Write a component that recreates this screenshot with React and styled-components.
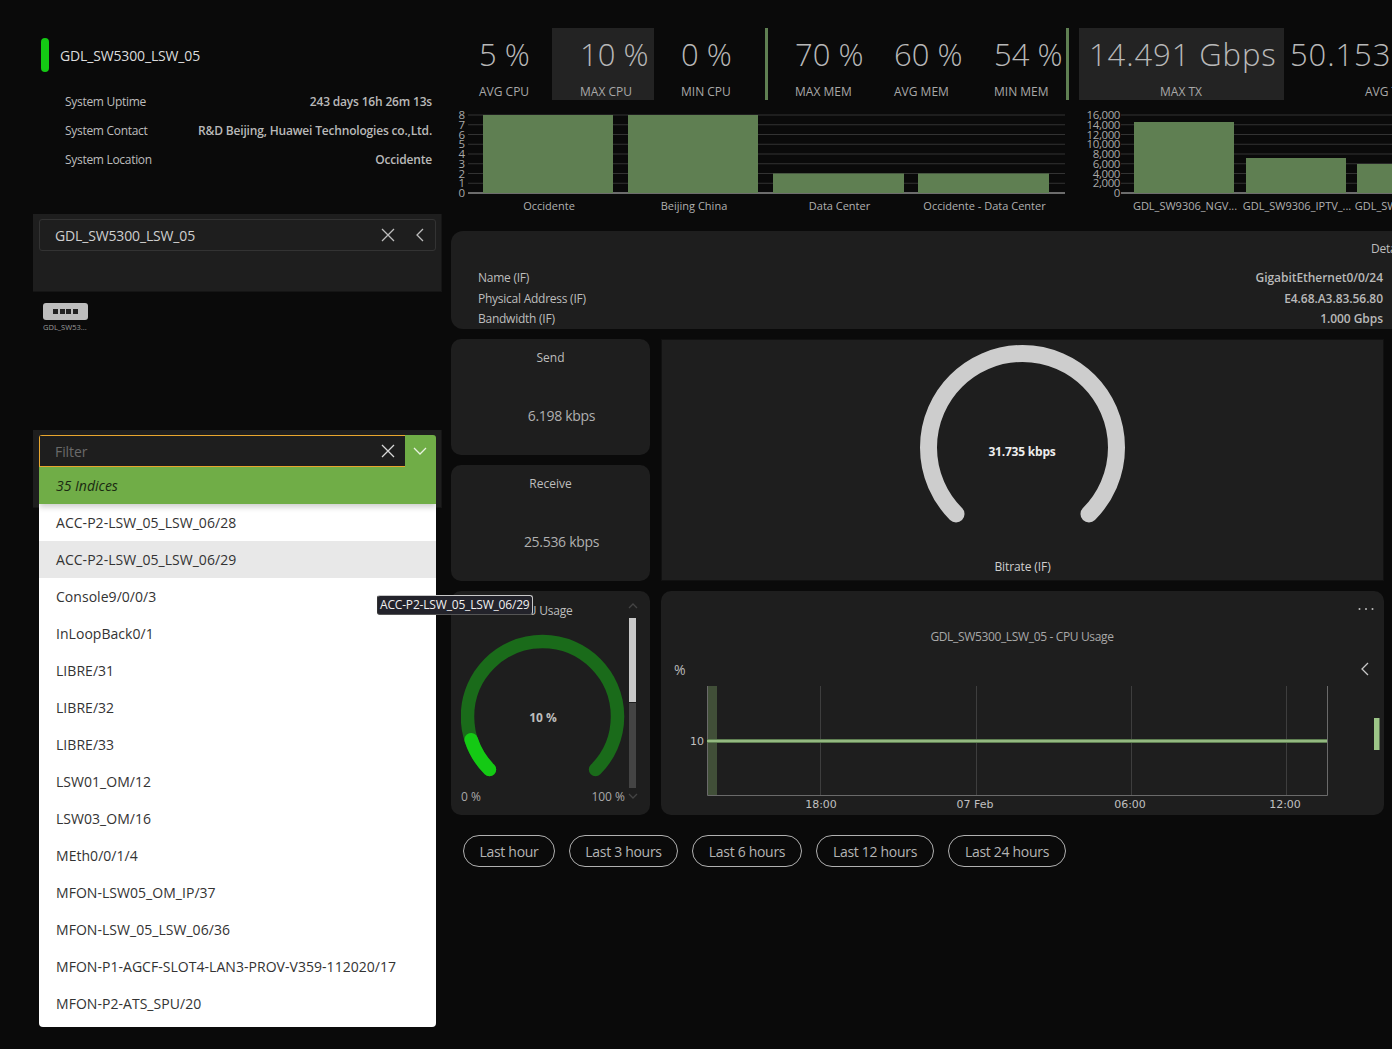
import React from 'react';
import styled, { createGlobalStyle } from 'styled-components';

const Global = createGlobalStyle`
  html, body { margin: 0; padding: 0; background: #0a0a0a; }
  body { font-family: "Open Sans", "Noto Sans", "Liberation Sans", sans-serif; color: #bdbdbd; }
  * { box-sizing: border-box; }
`;

const Page = styled.div`
  position: relative;
  display: flex;
  align-items: flex-start;
  gap: 9px;
  width: 1392px;
  height: 1049px;
  padding-left: 33px;
  overflow: hidden;
  background: #0a0a0a;
`;

const LeftColumn = styled.aside`
  flex: 0 0 409px;
  position: relative;
  padding-top: 38px;
`;

const DeviceHeader = styled.header`
  display: flex;
  align-items: center;
  gap: 11px;
  height: 34px;
  padding-left: 8px;
  color: #dcdcdc;
  font-size: 14px;
  letter-spacing: -0.15px;
`;

const StatusBar = styled.span`
  width: 8px;
  height: 34px;
  border-radius: 4px;
  background: #14c914;
`;

const InfoList = styled.div`
  margin-top: 15px;
  padding: 0 10px 0 32px;
`;

const InfoRow = styled.div`
  display: flex;
  justify-content: space-between;
  align-items: center;
  height: 29px;
  font-size: 12px;
  letter-spacing: -0.3px;
`;

const InfoValue = styled.b`
  font-weight: 600;
  color: #b9b9b9;
  letter-spacing: -0.18px;
`;

const SelectPanel = styled.section`
  height: 78px;
  margin-top: ${p => p.$top}px;
  padding: 5px 5px 5px 6px;
  background: #1e1e1e;
  border-right: 1px solid #151515;
  border-bottom: 1px solid #151515;
`;

const SelectBox = styled.div`
  display: flex;
  align-items: center;
  gap: 21px;
  height: 32px;
  padding: 0 11px 0 15px;
  border: 1px solid #333;
  border-radius: 3px;
  color: #cfcfcf;
  font-size: 14px;
  letter-spacing: -0.15px;
`;

const SelectText = styled.span`
  flex: 1;
`;

const IconSvg = styled.svg`
  display: block;
  flex: none;
  fill: none;
  stroke: ${p => p.$color || '#bdbdbd'};
  stroke-width: 1.3;
`;

const DeviceNode = styled.div`
  display: flex;
  flex-direction: column;
  width: 46px;
  margin: 11px 0 0 10px;
`;

const DeviceBody = styled.div`
  display: flex;
  align-items: center;
  justify-content: center;
  gap: 1.5px;
  width: 45px;
  height: 17px;
  border-radius: 3px;
  background: #bdbdbd;
`;

const Port = styled.i`
  width: 5px;
  height: 5px;
  background: #222;
`;

const DeviceLabel = styled.span`
  margin-top: 2px;
  font-size: 7.5px;
  line-height: 11px;
  color: #9a9a9a;
  white-space: nowrap;
`;

const FilterBar = styled.div`
  display: flex;
  height: 32px;
  border-radius: 3px 3px 0 0;
  overflow: hidden;
`;

const FilterInput = styled.div`
  flex: 1;
  display: flex;
  align-items: center;
  justify-content: space-between;
  padding: 0 10px 0 15px;
  background: #1e1e1e;
  border: 1px solid #e8a62e;
  border-right: 0;
  color: #6a6a6a;
  font-size: 14px;
  letter-spacing: -0.1px;
`;

const FilterToggle = styled.div`
  flex: 0 0 31px;
  display: flex;
  align-items: center;
  justify-content: center;
  padding-right: 2px;
  background: #70ad47;
`;

const Dropdown = styled.div`
  position: absolute;
  left: 6px;
  top: 467px;
  width: 397px;
  border-radius: 0 0 4px 4px;
  overflow: hidden;
  background: #fff;
  padding-bottom: 5px;
`;

const DropdownHead = styled.div`
  position: relative;
  display: flex;
  align-items: center;
  height: 37px;
  padding-left: 17px;
  background: #70ad47;
  box-shadow: 0 3px 6px rgba(0, 0, 0, 0.2);
  color: #1a2a12;
  font-size: 14px;
  font-style: italic;
`;

const DropdownRow = styled.div`
  display: flex;
  align-items: center;
  height: 37px;
  padding-left: 17px;
  background: ${p => (p.$active ? '#e8e8e8' : '#fff')};
  color: #333;
  font-size: 14px;
  letter-spacing: 0.04px;
  white-space: nowrap;
`;

const Tooltip = styled.div`
  position: absolute;
  left: 344px;
  top: 595px;
  z-index: 5;
  width: 156px;
  height: 20px;
  padding-left: 2px;
  border: 1px solid #c8c8c8;
  border-left-color: #333;
  border-bottom-color: #555;
  border-radius: 3px;
  background: #23232b;
  color: #f0f0f0;
  font-size: 12px;
  line-height: 18px;
  letter-spacing: -0.18px;
  white-space: nowrap;
`;

const RightColumn = styled.main`
  flex: 0 0 auto;
  width: 933px;
  padding-top: 28px;
`;

const StatsRow = styled.div`
  display: flex;
  width: 1100px;
  height: 72px;
`;

const StatCell = styled.div`
  flex: 0 0 ${p => p.$w}px;
  padding-left: ${p => p.$pad}px;
  background: ${p => (p.$hl ? '#232323' : 'transparent')};
  margin-left: ${p => p.$ml || 0}px;
  white-space: nowrap;
`;

const StatValue = styled.div`
  height: 50px;
  font-size: 31px;
  line-height: 53px;
  font-weight: 300;
  color: #b8b8b8;
  letter-spacing: ${p => p.$track || 0}px;
`;

const StatLabel = styled.div`
  font-size: 12px;
  line-height: 28px;
  color: #a8a8a8;
  padding-left: ${p => p.$shift || 0}px;
`;

const StatDivider = styled.span`
  flex: 0 0 3px;
  background: #5f7f52;
`;

const ChartsRow = styled.div`
  display: flex;
  gap: 20px;
  width: 1100px;
  height: 105px;
  margin-top: 10px;
`;

const PlotSvg = styled.svg`
  display: block;
  flex: none;
  font-family: "Open Sans", "Noto Sans", sans-serif;
`;

const DetailsPanel = styled.section`
  width: 1000px;
  height: 98px;
  margin-top: 16px;
  padding: 0 0 0 27px;
  background: #1e1e1e;
  border-radius: 12px;
  overflow: hidden;
  font-size: 12px;
  letter-spacing: -0.25px;
`;

const DetailsTitle = styled.div`
  height: 36px;
  padding: 9px 0 0 893px;
  white-space: nowrap;
`;

const DetailRows = styled.div`
  width: 905px;
`;

const DetailRow = styled.div`
  display: flex;
  justify-content: space-between;
  align-items: center;
  height: 20.7px;
`;

const DetailValue = styled.b`
  font-weight: 600;
  color: #b9b9b9;
  letter-spacing: -0.05px;
`;

const DashGrid = styled.div`
  display: grid;
  grid-template-columns: 199px 723px;
  grid-template-rows: 116px 116px 224px;
  column-gap: 11px;
  row-gap: 10px;
  margin-top: 10px;
`;

const Card = styled.section`
  background: #1e1e1e;
  border-radius: 10px;
`;

const KpiCard = styled(Card)`
  display: flex;
  flex-direction: column;
  align-items: center;
  padding-top: 10px;
  font-size: 12px;
`;

const KpiValue = styled.div`
  margin-top: 40px;
  padding-left: 22px;
  font-size: 14px;
  letter-spacing: -0.3px;
  color: #b0b0b0;
`;

const BitrateCard = styled.section`
  grid-column: 2;
  grid-row: 1 / span 2;
  display: flex;
  flex-direction: column;
  align-items: center;
  background: #1e1e1e;
  border: 1px solid #111;
`;

const GaugeTitle = styled.div`
  margin-top: 4px;
  font-size: 12px;
  letter-spacing: -0.1px;
  color: #cfcfcf;
`;

const CpuCard = styled(Card)`
  display: flex;
  padding: 12px 12px 12px 10px;
`;

const CpuMain = styled.div`
  flex: 0 0 164px;
  font-size: 12px;
`;

const CpuTitle = styled.div`
  text-align: center;
  line-height: 16px;
  letter-spacing: -0.2px;
`;

const CpuScale = styled.div`
  display: flex;
  justify-content: space-between;
  margin-top: -2px;
  font-size: 12px;
  line-height: 16px;
  color: #a8a8a8;
`;

const ScrollBar = styled.div`
  flex: 0 0 10px;
  display: flex;
  flex-direction: column;
  align-items: center;
  margin-left: 2.5px;
`;

const ScrollThumb = styled.div`
  width: 7px;
  height: ${p => p.$h}px;
  margin-top: ${p => p.$top || 0}px;
  background: ${p => p.$color};
`;

const ChartCard = styled(Card)`
  overflow: hidden;
`;

const RangeRow = styled.nav`
  display: flex;
  gap: 14px;
  margin-top: 20px;
  padding-left: 12px;
`;

const RangeButton = styled.button`
  width: ${p => p.$w}px;
  height: 32px;
  padding: 0;
  border: 1px solid #b0b0b0;
  border-radius: 16px;
  background: transparent;
  color: #b4b4b4;
  font-family: inherit;
  font-size: 14px;
  letter-spacing: -0.3px;
  white-space: nowrap;
`;

const Close = ({ color }) => (
  <IconSvg $color={color} width="14" height="14" viewBox="0 0 14 14"><path d="M1 1l12 12M13 1L1 13" /></IconSvg>
);
const ChevronLeft = () => (
  <IconSvg width="8" height="14" viewBox="0 0 8 14"><path d="M7 1L1 7l6 6" /></IconSvg>
);
const ChevronDown = () => (
  <IconSvg $color="#e8f2e0" width="14" height="8" viewBox="0 0 14 8"><path d="M1 1l6 6 6-6" /></IconSvg>
);
const ChevronV = ({ up }) => (
  <IconSvg $color="#444" width="10" height="6" viewBox="0 0 10 6"><path d={up ? 'M1 5l4-4 4 4' : 'M1 1l4 4 4-4'} /></IconSvg>
);

const polar = (cx, cy, r, deg) => {
  const a = (deg * Math.PI) / 180;
  return [cx + r * Math.cos(a), cy + r * Math.sin(a)];
};
const arc = (cx, cy, r, from, to) => {
  const [x1, y1] = polar(cx, cy, r, from);
  const [x2, y2] = polar(cx, cy, r, to);
  return `M${x1} ${y1}A${r} ${r} 0 ${to - from > 180 ? 1 : 0} 1 ${x2} ${y2}`;
};

const BitrateGauge = () => (
  <PlotSvg width="721" height="214" viewBox="0 0 721 214">
    <path d={arc(360.5, 107.5, 94, 135, 405)} fill="none" stroke="#cdcdcd" strokeWidth="17" strokeLinecap="round" />
    <text x="360" y="116" textAnchor="middle" fontSize="12" fontWeight="700" letterSpacing="-0.2" fill="#ececec">31.735 kbps</text>
  </PlotSvg>
);

const CpuGauge = () => (
  <PlotSvg width="164" height="172" viewBox="0 0 164 172">
    <path d={arc(81.5, 97.5, 75, 135, 405)} fill="none" stroke="#1a6b1a" strokeWidth="13.5" strokeLinecap="round" />
    <path d={arc(81.5, 97.5, 75, 135, 162)} fill="none" stroke="#14c914" strokeWidth="13.5" strokeLinecap="round" />
    <text x="82" y="103" textAnchor="middle" fontSize="12" fontWeight="700" fill="#bdbdbd">10 %</text>
  </PlotSvg>
);

const BarChart = ({ width, ticks, labelX, axisX, bars, tickTrack }) => {
  const top = 5, base = 83, n = ticks.length - 1;
  return (
    <PlotSvg width={width} height="105" viewBox={`0 0 ${width} 105`}>
      {ticks.map((t, i) => {
        const y = base - ((base - top) * i) / n;
        return (
          <g key={t}>
            <line x1={axisX} x2={width} y1={y} y2={y} stroke={i === 0 ? '#cfcfcf' : '#333'} />
            <text x={labelX} y={y + 4} textAnchor="end" fontSize="11.5" letterSpacing={tickTrack} fill="#a8a8a8">{t}</text>
          </g>
        );
      })}
      {bars.map(b => (
        <g key={b.label}>
          <rect x={b.x} y={b.top} width={b.w} height={base - b.top} fill="#5f7f52" />
          <text x={b.x + b.w / 2 + 1} y="100" textAnchor="middle" fontSize="11" fill="#b0b0b0">{b.label}</text>
        </g>
      ))}
    </PlotSvg>
  );
};

const LineChart = () => (
  <PlotSvg width="723" height="224" viewBox="0 0 723 224">
    <text x="361" y="50" textAnchor="middle" fontSize="12" letterSpacing="-0.35" fill="#a8a8a8">GDL_SW5300_LSW_05 - CPU Usage</text>
    <g fill="#bdbdbd"><circle cx="698.5" cy="18" r="1" /><circle cx="705" cy="18" r="1" /><circle cx="711.5" cy="18" r="1" /></g>
    <path d="M707 72l-6 6 6 6" fill="none" stroke="#c8c8c8" strokeWidth="1.3" />
    <text x="13" y="84" fontSize="14" fill="#b8b8b8">%</text>
    <rect x="46" y="95" width="10" height="109" fill="#414f38" />
    {[159, 315, 470, 625].map(x => <line key={x} x1={x + 0.5} x2={x + 0.5} y1="95" y2="204" stroke="#3e3e3e" />)}
    <path d="M46.5 95V204.5H666.5V95" fill="none" stroke="#6a6a6a" />
    <line x1="46" x2="666" y1="150" y2="150" stroke="#5f7f52" strokeWidth="4" />
    <line x1="46" x2="666" y1="150" y2="150" stroke="#a6cc92" strokeWidth="1.6" />
    <text x="43" y="154" textAnchor="end" fontSize="11" fontFamily="DejaVu Sans" fill="#c0c0c0">10</text>
    {[['18:00', 160], ['07 Feb', 314], ['06:00', 469], ['12:00', 624]].map(([t, x]) => (
      <text key={t} x={x} y="217" textAnchor="middle" fontSize="11" fontFamily="DejaVu Sans" fill="#c0c0c0">{t}</text>
    ))}
    <rect x="713" y="127" width="5.5" height="32" fill="#9cc587" />
  </PlotSvg>
);

const indices = [
  'ACC-P2-LSW_05_LSW_06/28', 'ACC-P2-LSW_05_LSW_06/29', 'Console9/0/0/3', 'InLoopBack0/1',
  'LIBRE/31', 'LIBRE/32', 'LIBRE/33', 'LSW01_OM/12', 'LSW03_OM/16', 'MEth0/0/1/4',
  'MFON-LSW05_OM_IP/37', 'MFON-LSW_05_LSW_06/36', 'MFON-P1-AGCF-SLOT4-LAN3-PROV-V359-112020/17', 'MFON-P2-ATS_SPU/20',
];

const ranges = [['Last hour', 92], ['Last 3 hours', 109], ['Last 6 hours', 110], ['Last 12 hours', 118], ['Last 24 hours', 118]];

const locBars = [
  { label: 'Occidente', x: 32, w: 130, top: 5 },
  { label: 'Beijing China', x: 177, w: 130, top: 5 },
  { label: 'Data Center', x: 322, w: 131, top: 63.5 },
  { label: 'Occidente - Data Center', x: 467, w: 131, top: 63.5 },
];
const txBars = [
  { label: 'GDL_SW9306_NGV...', x: 49, w: 100, top: 12 },
  { label: 'GDL_SW9306_IPTV_...', x: 161, w: 100, top: 48 },
  { label: 'GDL_SW9306_OLT_...', x: 272, w: 100, top: 54 },
];

export default function App() {
  return (
    <Page>
      <Global />
      <LeftColumn>
        <DeviceHeader><StatusBar />GDL_SW5300_LSW_05</DeviceHeader>
        <InfoList>
          <InfoRow><span>System Uptime</span><InfoValue>243 days 16h 26m 13s</InfoValue></InfoRow>
          <InfoRow><span>System Contact</span><InfoValue>R&amp;D Beijing, Huawei Technologies co.,Ltd.</InfoValue></InfoRow>
          <InfoRow><span>System Location</span><InfoValue>Occidente</InfoValue></InfoRow>
        </InfoList>
        <SelectPanel $top={40}>
          <SelectBox>
            <SelectText>GDL_SW5300_LSW_05</SelectText>
            <Close />
            <ChevronLeft />
          </SelectBox>
        </SelectPanel>
        <DeviceNode>
          <DeviceBody><Port /><Port /><Port /><Port /></DeviceBody>
          <DeviceLabel>GDL_SW53...</DeviceLabel>
        </DeviceNode>
        <SelectPanel $top={97}>
          <FilterBar>
            <FilterInput>Filter<Close color="#d8d8d8" /></FilterInput>
            <FilterToggle><ChevronDown /></FilterToggle>
          </FilterBar>
        </SelectPanel>
        <Dropdown>
          <DropdownHead>35 Indices</DropdownHead>
          {indices.map((t, i) => <DropdownRow key={t} $active={i === 1}>{t}</DropdownRow>)}
        </Dropdown>
        <Tooltip>ACC-P2-LSW_05_LSW_06/29</Tooltip>
      </LeftColumn>

      <RightColumn>
        <StatsRow>
          <StatCell $w={101} $pad={28}><StatValue>5 %</StatValue><StatLabel>AVG CPU</StatLabel></StatCell>
          <StatCell $w={102} $pad={28} $hl><StatValue>10 %</StatValue><StatLabel>MAX CPU</StatLabel></StatCell>
          <StatCell $w={111} $pad={27}><StatValue>0 %</StatValue><StatLabel>MIN CPU</StatLabel></StatCell>
          <StatDivider />
          <StatCell $w={99} $pad={27}><StatValue>70 %</StatValue><StatLabel>MAX MEM</StatLabel></StatCell>
          <StatCell $w={100} $pad={27}><StatValue>60 %</StatValue><StatLabel>AVG MEM</StatLabel></StatCell>
          <StatCell $w={99} $pad={27}><StatValue>54 %</StatValue><StatLabel>MIN MEM</StatLabel></StatCell>
          <StatDivider />
          <StatCell $w={205} $pad={10} $ml={10} $hl><StatValue $track={0.9}>14.491 Gbps</StatValue><StatLabel $shift={71}>MAX TX</StatLabel></StatCell>
          <StatCell $w={205} $pad={6}><StatValue $track={0.9}>50.153 Gbps</StatValue><StatLabel $shift={75}>AVG TX</StatLabel></StatCell>
        </StatsRow>
        <ChartsRow>
          <BarChart width={614} axisX={17} labelX={14} tickTrack={0} ticks={[0, 1, 2, 3, 4, 5, 6, 7, 8]} bars={locBars} />
          <BarChart width={400} axisX={36} labelX={35} tickTrack={-0.4} ticks={['0', '2,000', '4,000', '6,000', '8,000', '10,000', '12,000', '14,000', '16,000']} bars={txBars} />
        </ChartsRow>
        <DetailsPanel>
          <DetailsTitle>Details</DetailsTitle>
          <DetailRows>
            <DetailRow><span>Name (IF)</span><DetailValue>GigabitEthernet0/0/24</DetailValue></DetailRow>
            <DetailRow><span>Physical Address (IF)</span><DetailValue>E4.68.A3.83.56.80</DetailValue></DetailRow>
            <DetailRow><span>Bandwidth (IF)</span><DetailValue>1.000 Gbps</DetailValue></DetailRow>
          </DetailRows>
        </DetailsPanel>
        <DashGrid>
          <KpiCard>Send<KpiValue>6.198 kbps</KpiValue></KpiCard>
          <BitrateCard>
            <BitrateGauge />
            <GaugeTitle>Bitrate (IF)</GaugeTitle>
          </BitrateCard>
          <KpiCard>Receive<KpiValue>25.536 kbps</KpiValue></KpiCard>
          <CpuCard>
            <CpuMain>
              <CpuTitle>CPU Usage</CpuTitle>
              <CpuGauge />
              <CpuScale><span>0 %</span><span>100 %</span></CpuScale>
            </CpuMain>
            <ScrollBar>
              <ChevronV up />
              <ScrollThumb $h={84} $top={9} $color="#c8c8c8" />
              <ScrollThumb $h={85} $top={1} $color="#444" />
              <ScrollThumb $h={5} $color="transparent" />
              <ChevronV />
            </ScrollBar>
          </CpuCard>
          <ChartCard><LineChart /></ChartCard>
        </DashGrid>
        <RangeRow>
          {ranges.map(([t, w]) => (
            <RangeButton key={t} $w={w}>{t}</RangeButton>
          ))}
        </RangeRow>
      </RightColumn>
    </Page>
  );
}
